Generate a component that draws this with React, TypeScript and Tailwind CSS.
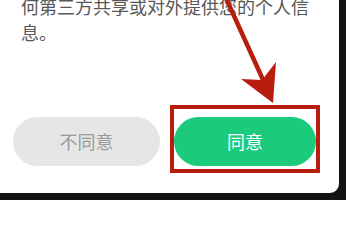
export default function App() {
  return (
    <div className="relative h-[200px] w-[346px] overflow-hidden bg-[#131313] font-['Noto_Sans_CJK_SC','Noto_Sans',sans-serif]">
      {/* dialog card (top is scrolled off) */}
      <div className="flex h-[193px] w-[339px] flex-col rounded-br-[9px] bg-white">
        {/* message area: content is bottom-aligned so the first line runs off the top */}
        <div className="flex h-[45px] shrink-0 flex-col justify-end">
          <p className="pl-[21px] text-[18px] leading-[26px] text-[#585858]">
            何第三方共享或对外提供您的个人信
            <br />
            息。
          </p>
        </div>

        <div className="mt-[60px] flex items-start">
          <button className="ml-[13px] mt-[12px] h-[49px] w-[147px] rounded-full bg-[#e6e6e6] text-[18px] text-[#9a9a9a]">
            不同意
          </button>
          <div className="ml-[10px] border-4 border-[#b81d10] pb-[3px] pt-[8px]">
            <button className="h-[49px] w-[142px] rounded-full bg-[#1bca7b] text-[18px] text-white">
              同意
            </button>
          </div>
        </div>
      </div>

      {/* annotation arrow */}
      <svg className="pointer-events-none absolute left-0 top-0" width="346" height="200" viewBox="0 0 346 200">
        <line x1="225" y1="-4" x2="264" y2="82" stroke="#b81d10" strokeWidth="4.5" />
        <polygon points="273,103 241,79 262,80 276,62" fill="#b81d10" />
      </svg>
    </div>
  )
}
